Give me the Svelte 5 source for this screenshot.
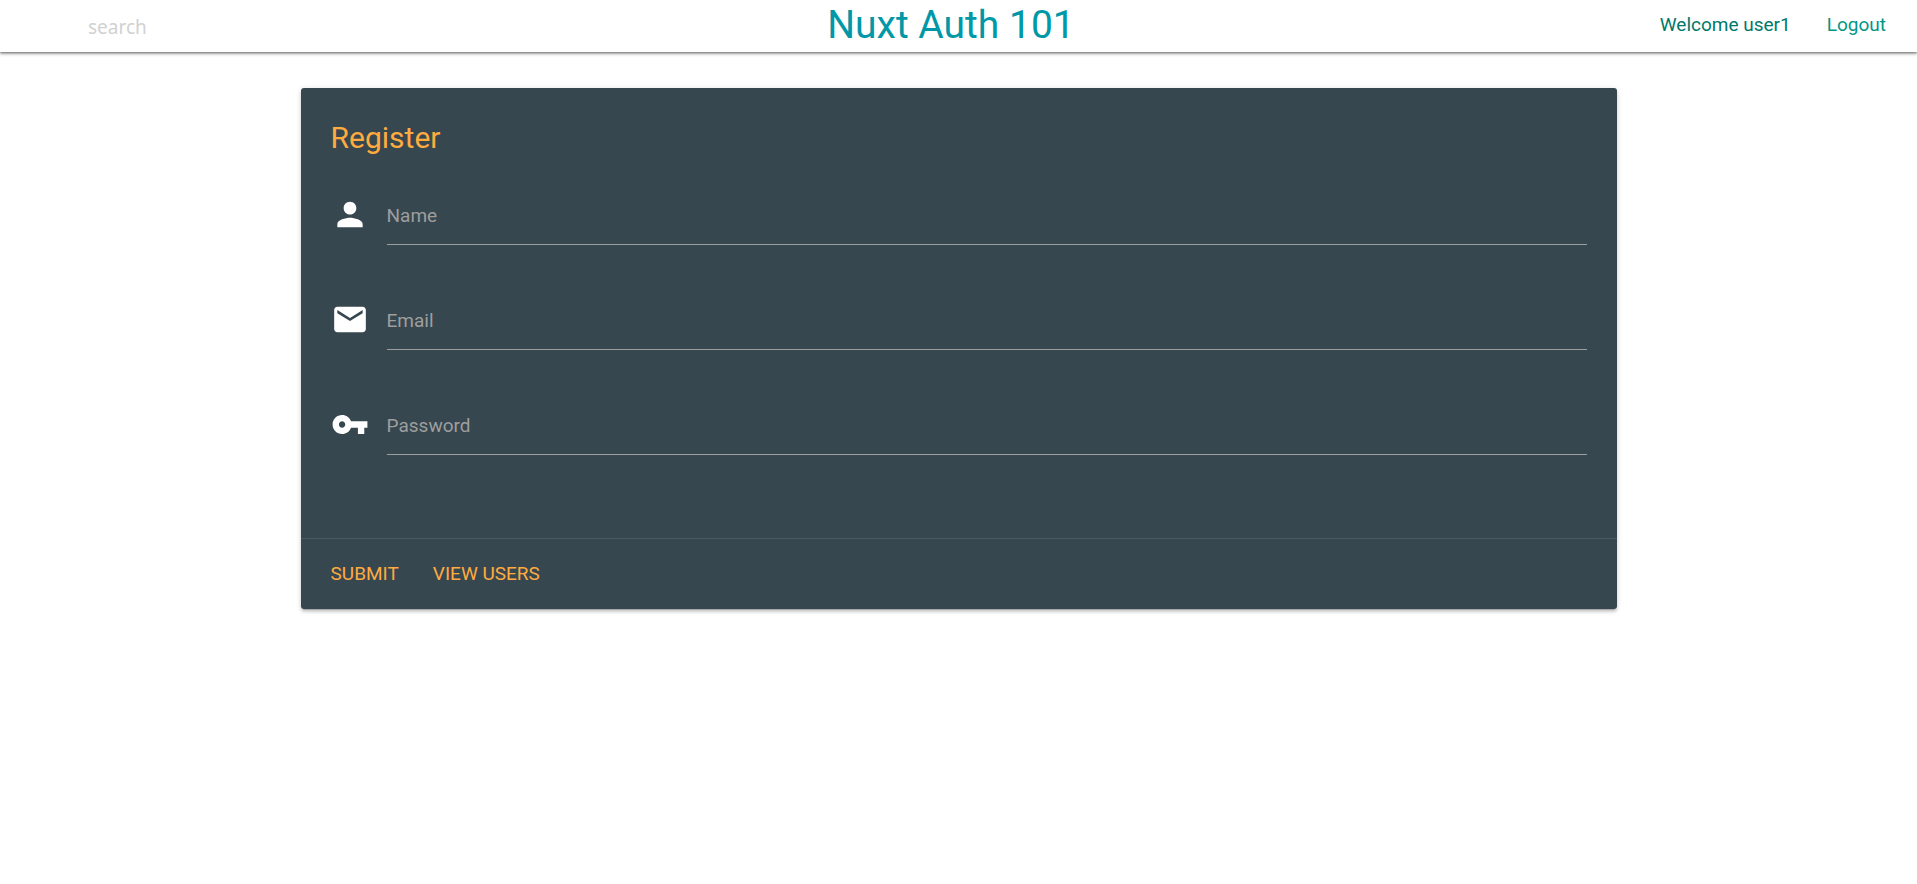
<script>
  const fields = $state([
    {
      id: 'name',
      label: 'Name',
      type: 'text',
      value: '',
      icon: 'M12 12c2.21 0 4-1.79 4-4s-1.79-4-4-4-4 1.79-4 4 1.79 4 4 4zm0 2c-2.67 0-8 1.34-8 4v2h16v-2c0-2.66-5.33-4-8-4z'
    },
    {
      id: 'email',
      label: 'Email',
      type: 'email',
      value: '',
      icon: 'M20 4H4c-1.1 0-1.99.9-1.99 2L2 18c0 1.1.9 2 2 2h16c1.1 0 2-.9 2-2V6c0-1.1-.9-2-2-2zm0 4l-8 5-8-5V6l8 5 8-5v2z'
    },
    {
      id: 'password',
      label: 'Password',
      type: 'password',
      value: '',
      icon: 'M12.65 10C11.83 7.67 9.61 6 7 6c-3.31 0-6 2.69-6 6s2.69 6 6 6c2.61 0 4.83-1.67 5.65-4H17v4h4v-4h2v-4H12.65zM7 14c-1.1 0-2-.9-2-2s.9-2 2-2 2 .9 2 2-.9 2-2 2z'
    }
  ]);
</script>

<header>
  <input class="search" type="search" placeholder="search" aria-label="search" />
  <a class="brand" href="#home">Nuxt Auth 101</a>
  <nav>
    <span class="welcome">Welcome user1</span>
    <a href="#logout">Logout</a>
  </nav>
</header>

<main>
  <form class="card" onsubmit={(e) => e.preventDefault()}>
    <div class="content">
      <h1>Register</h1>
      {#each fields as field (field.id)}
        <div class="field">
          <svg viewBox="0 0 24 24" aria-hidden="true"><path d={field.icon} /></svg>
          <div class="control">
            <input id={field.id} type={field.type} bind:value={field.value} />
            <label for={field.id} class:hidden={field.value}>{field.label}</label>
          </div>
        </div>
      {/each}
    </div>
    <div class="actions">
      <button type="submit">SUBMIT</button>
      <a href="#users">VIEW USERS</a>
    </div>
  </form>
</main>

<style>
  :global(body) {
    background: #fff;
    font-family: Roboto, sans-serif;
    font-size: 19px;
    line-height: 28px;
  }

  header {
    display: grid;
    grid-template-columns: 1fr auto 1fr;
    align-items: center;
    box-sizing: border-box;
    height: 52px;
    padding: 0 31px 2px 16px;
    background: #fff;
    box-shadow:
      0 2px 3px rgba(0, 0, 0, 0.25),
      0 1px 2px rgba(0, 0, 0, 0.35),
      0 0 5px rgba(0, 0, 0, 0.1);
  }

  .search {
    justify-self: start;
    width: 300px;
    height: 44px;
    box-sizing: border-box;
    margin: 4px 0 0 72px;
    padding: 0;
    border: 0;
    outline: 0;
    background: none;
    color: #444;
    font: 19px 'Noto Sans', sans-serif;
  }

  .search::placeholder {
    color: #d1d1d1;
    opacity: 1;
  }

  .brand {
    color: #0097a7;
    font-size: 39px;
    line-height: 48px;
  }

  a {
    color: #009688;
    text-decoration: none;
  }

  nav {
    display: flex;
    justify-content: flex-end;
    gap: 36px;
  }

  .welcome {
    color: #00796b;
  }

  main {
    box-sizing: border-box;
    width: 70%;
    margin: 0 auto;
    padding: 36px 12px 36px 13px;
  }

  .card {
    border-radius: 3px;
    background: #37474f;
    box-shadow:
      0 3px 3px rgba(0, 0, 0, 0.14),
      0 1px 6px rgba(0, 0, 0, 0.12),
      0 3px 1px -2px rgba(0, 0, 0, 0.2);
  }

  .content {
    padding: 30px 30px 35px;
  }

  h1 {
    margin: 0 0 30px;
    color: #ffab40;
    font-size: 30px;
    font-weight: 400;
    line-height: 40px;
  }

  .field {
    display: flex;
    gap: 18px;
    height: 57px;
    margin-bottom: 48px;
  }

  svg {
    flex: none;
    width: 38px;
    height: 39px;
    margin-top: 7px;
    fill: #fff;
  }

  .control {
    display: grid;
    flex: 1;
  }

  .control > * {
    grid-area: 1 / 1;
  }

  .control input {
    box-sizing: border-box;
    width: 100%;
    height: 57px;
    padding: 0;
    border: 0;
    border-bottom: 1px solid #9e9e9e;
    outline: 0;
    background: none;
    color: #fff;
    font: inherit;
  }

  label {
    align-self: center;
    justify-self: start;
    margin-bottom: 2px;
    color: #9e9e9e;
    pointer-events: none;
  }

  .hidden {
    visibility: hidden;
  }

  .actions {
    display: flex;
    gap: 34px;
    padding: 21px 30px;
    border-top: 1px solid #485960;
  }

  .actions > * {
    padding: 0;
    border: 0;
    background: none;
    color: #ffab40;
    font: inherit;
    cursor: pointer;
  }
</style>
